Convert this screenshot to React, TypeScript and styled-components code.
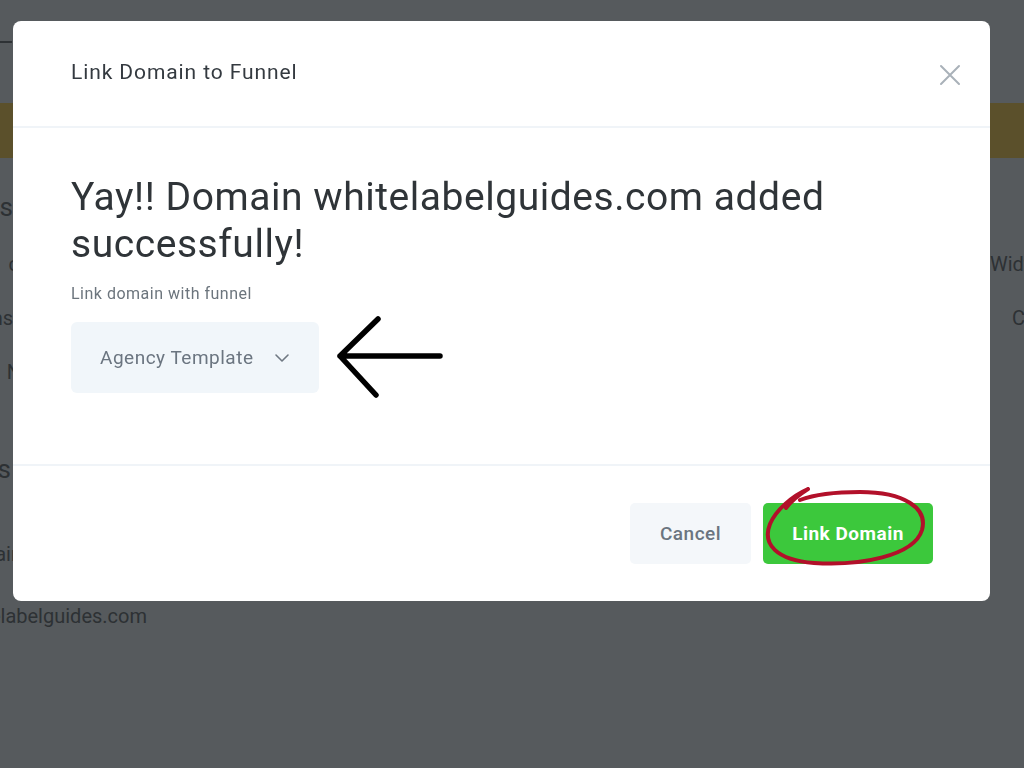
import React from "react";
import styled, { createGlobalStyle } from "styled-components";

const GlobalStyle = createGlobalStyle`
  html, body {
    margin: 0;
    padding: 0;
    background: #565a5d;
    font-family: Roboto, "Liberation Sans", Arial, sans-serif;
    overflow: hidden;
  }
`;

interface BgRowProps {
  $height: number;
}

interface BgCellProps {
  $width: number;
  $size?: number;
}

export default function App() {
  return (
    <>
      <GlobalStyle />
      <BgPage>
        <BgTop>
          <BgDash />
        </BgTop>
        <BgBanner />
        <BgRow $height={76}>
          <BgLeft $width={13} $size={26}>Domains</BgLeft>
        </BgRow>
        <BgRow $height={54}>
          <BgLeft $width={19}>c</BgLeft>
          <BgRight>Width</BgRight>
        </BgRow>
        <BgRow $height={54}>
          <BgLeft $width={13}>Columns</BgLeft>
          <BgRight $indent={22}>Col</BgRight>
        </BgRow>
        <BgRow $height={54}>
          <BgLeft $width={21}>N</BgLeft>
        </BgRow>
        <BgRow $height={100}>
          <BgLeft $width={11} $size={26}>Domains</BgLeft>
        </BgRow>
        <BgRow $height={82}>
          <BgLeft $width={22}>Domain</BgLeft>
        </BgRow>
        <BgRow $height={62}>
          <BgLeft $width={147}>whitelabelguides.com</BgLeft>
        </BgRow>
      </BgPage>

      <Modal>
        <ModalHeader>
          <ModalTitle>Link Domain to Funnel</ModalTitle>
          <CloseButton aria-label="Close">
            <svg width="22" height="22" viewBox="0 0 22 22">
              <path
                d="M2 2 L20 20 M20 2 L2 20"
                stroke="#a9b1b9"
                strokeWidth="2"
                strokeLinecap="round"
              />
            </svg>
          </CloseButton>
        </ModalHeader>

        <ModalBody>
          <Heading>Yay!! Domain whitelabelguides.com added successfully!</Heading>
          <FieldLabel>Link domain with funnel</FieldLabel>
          <SelectRow>
            <SelectBox>
              <span>Agency Template</span>
              <svg width="16" height="10" viewBox="0 0 16 10">
                <path
                  d="M2 2 L8 8 L14 2"
                  fill="none"
                  stroke="#6f7882"
                  strokeWidth="1.6"
                  strokeLinecap="round"
                  strokeLinejoin="round"
                />
              </svg>
            </SelectBox>
            <ArrowMark width="108" height="84" viewBox="0 0 108 84">
              <path
                d="M104 40 L4 40 M42 3 L4 40 L40 79"
                fill="none"
                stroke="#000"
                strokeWidth="5.5"
                strokeLinecap="round"
                strokeLinejoin="round"
              />
            </ArrowMark>
          </SelectRow>
        </ModalBody>

        <ModalFooter>
          <CancelButton>Cancel</CancelButton>
          <PrimaryWrap>
            <PrimaryButton>Link Domain</PrimaryButton>
            <CircleMark width="170" height="84" viewBox="0 0 170 84">
              <path
                d="M46 3 C30 10 14 24 8 38 C0 58 14 74 52 77 C98 80 152 70 160 44 C166 22 142 6 98 6 C74 6 54 8 38 14 M46 3 C38 8 30 14 24 22"
                fill="none"
                stroke="#b2102a"
                strokeWidth="4"
                strokeLinecap="round"
                strokeLinejoin="round"
              />
            </CircleMark>
          </PrimaryWrap>
        </ModalFooter>
      </Modal>
    </>
  );
}

const BgPage = styled.div`
  width: 1024px;
  height: 768px;
  display: flex;
  flex-direction: column;
  color: #2d3134;
  font-size: 20px;
`;

const BgTop = styled.div`
  height: 103px;
  display: flex;
  align-items: flex-start;
`;

const BgDash = styled.div`
  width: 12px;
  height: 2px;
  margin-top: 41px;
  background: #2e3235;
`;

const BgBanner = styled.div`
  height: 55px;
  background: #5b502b;
`;

const BgRow = styled.div<BgRowProps>`
  height: ${(p) => p.$height}px;
  display: flex;
  align-items: flex-end;
  justify-content: space-between;
  box-sizing: border-box;
  padding-bottom: 12px;
`;

const BgLeft = styled.div<BgCellProps>`
  width: ${(p) => p.$width}px;
  display: flex;
  justify-content: flex-end;
  overflow: hidden;
  white-space: nowrap;
  font-size: ${(p) => p.$size ?? 20}px;
  color: #2d3134;
`;

const BgRight = styled.div<{ $indent?: number }>`
  width: ${(p) => 34 - (p.$indent ?? 0)}px;
  overflow: hidden;
  white-space: nowrap;
  color: #2d3134;
`;

const Modal = styled.div`
  position: fixed;
  top: 21px;
  left: 13px;
  width: 977px;
  height: 580px;
  background: #ffffff;
  border-radius: 8px;
  display: flex;
  flex-direction: column;
  overflow: hidden;
`;

const ModalHeader = styled.div`
  height: 105px;
  flex-shrink: 0;
  display: flex;
  align-items: center;
  justify-content: space-between;
  padding: 0 29px 0 58px;
  border-bottom: 2px solid #f0f4f8;
  box-sizing: content-box;
`;

const ModalTitle = styled.h4`
  margin: 0;
  margin-top: -3px;
  font-size: 21px;
  letter-spacing: 0.9px;
  font-weight: 400;
  color: #343a40;
`;

const CloseButton = styled.button`
  border: 0;
  background: none;
  padding: 0;
  width: 22px;
  height: 22px;
  margin-top: 2px;
  display: flex;
  cursor: pointer;
`;

const ModalBody = styled.div`
  height: 338px;
  flex-shrink: 0;
  padding: 46px 58px 0;
  box-sizing: border-box;
  border-bottom: 2px solid #f0f4f8;
`;

const Heading = styled.h2`
  margin: 0;
  font-size: 39px;
  letter-spacing: 0.55px;
  line-height: 47px;
  font-weight: 400;
  color: #2f3438;
  max-width: 800px;
`;

const FieldLabel = styled.div`
  margin-top: 16px;
  font-size: 16px;
  letter-spacing: 0.5px;
  color: #6c757d;
`;

const SelectRow = styled.div`
  margin-top: 11px;
  display: flex;
  align-items: center;
  gap: 17px;
`;

const SelectBox = styled.div`
  width: 248px;
  height: 71px;
  box-sizing: border-box;
  background: #f1f6fa;
  border-radius: 6px;
  display: flex;
  align-items: center;
  padding: 0 28px 0 29px;
  gap: 21px;
  font-size: 19px;
  letter-spacing: 0.5px;
  color: #6b7580;

  svg {
    margin-top: 2px;
  }
`;

const ArrowMark = styled.svg`
  flex-shrink: 0;
  margin-top: 2px;
`;

const ModalFooter = styled.div`
  flex: 1;
  display: flex;
  align-items: center;
  justify-content: flex-end;
  gap: 12px;
  padding: 0 57px 0 0;
`;

const ButtonBase = styled.button`
  height: 61px;
  border: 0;
  border-radius: 5px;
  font-family: Roboto, "Liberation Sans", Arial, sans-serif;
  font-size: 19px;
  letter-spacing: 0.5px;
  cursor: pointer;
`;

const CancelButton = styled(ButtonBase)`
  width: 121px;
  background: #f4f7fa;
  color: #6b7580;
  font-weight: 500;
`;

const PrimaryWrap = styled.div`
  position: relative;
  display: flex;
`;

const PrimaryButton = styled(ButtonBase)`
  width: 170px;
  background: #3cc83c;
  color: #ffffff;
  font-weight: 700;
`;

const CircleMark = styled.svg`
  position: absolute;
  left: -1px;
  top: -17px;
  pointer-events: none;
`;
